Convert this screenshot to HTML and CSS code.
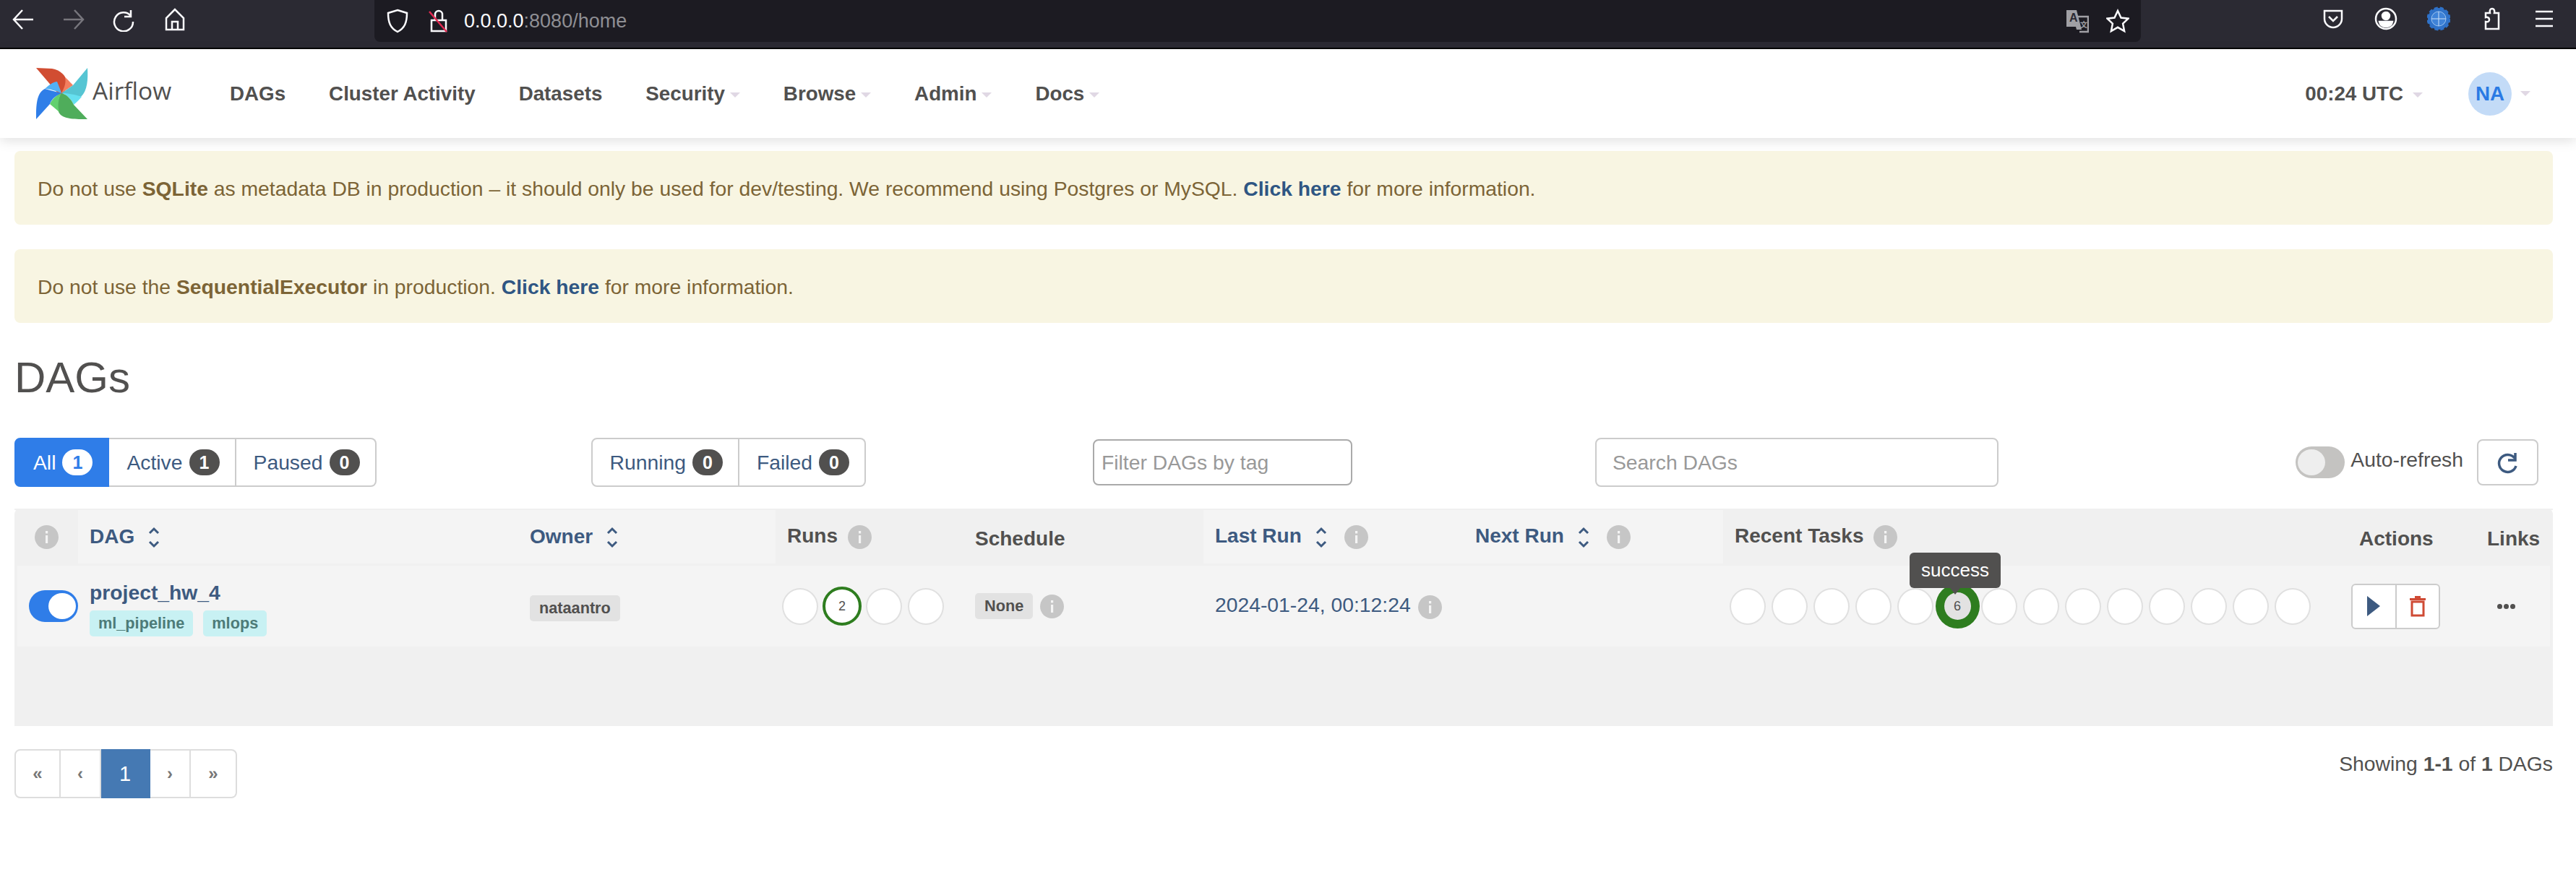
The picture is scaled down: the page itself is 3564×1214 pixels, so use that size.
FILE: index.html
```html
<!DOCTYPE html>
<html lang="en">

<head>
    <meta charset="UTF-8">
    <title>Airflow - DAGs</title>
    <link rel="stylesheet" href="styles.css">
</head>

<body>
    <svg class="defs" width="0" height="0">
        <symbol id="info" viewBox="0 0 33 33">
            <circle cx="16.5" cy="16.5" r="16.5" fill="#c6c6c6" />
            <rect x="15" y="14" width="3.2" height="11" fill="#f4f4f4" />
            <rect x="15" y="8" width="3.2" height="3.4" fill="#f4f4f4" />
        </symbol>
        <symbol id="sort" viewBox="0 0 18 30">
            <path d="M3 9l6-6 6 6M3 21l6 6 6-6" fill="none" stroke="#3d5a80" stroke-width="3" />
        </symbol>
    </svg>

    <!-- browser chrome -->
    <div class="browser">
        <div class="browser-nav">
            <svg class="ico" viewBox="0 0 32 32"><path d="M30 16H4M15 3L3 16l12 13" /></svg>
            <svg class="ico ico-off" viewBox="0 0 32 32"><path d="M2 16h26M17 3l12 13-12 13" /></svg>
            <svg class="ico" viewBox="0 0 32 32"><path d="M25 3v9h-9M25 11a13 13 0 1 0 3 8" /></svg>
            <svg class="ico" viewBox="0 0 32 32"><path d="M16 2L4 14v16h24V14zM12 30V19h8v11" /></svg>
        </div>
        <div class="urlbar">
            <svg class="ico" viewBox="0 0 32 32"><path d="M16 1l13 4c0 13-3 21-13 26C6 26 3 18 3 5z" /></svg>
            <svg class="ico" viewBox="0 0 32 32"><path d="M6 15h20v15H6zM11 15V7a5 5 0 0 1 10 0v8" /><path class="red" d="M3 3l24 28" /></svg>
            <span class="url"><b>0.0.0.0</b>:8080/home</span>
            <div class="url-end">
                <svg class="ico ico-translate" viewBox="0 0 32 32">
                    <path class="page-back" d="M16 10h15v21H19" />
                    <path class="page-front" d="M1 1h14l7 27h-7l-1-4H1z" />
                    <text class="glyph-a" x="5" y="17">A</text>
                    <text class="glyph-b" x="20" y="25">文</text>
                </svg>
                <svg class="ico" viewBox="0 0 32 32"><path d="M16 2l4.500 9.500 10 1.200-7.400 7 2 10.300-9.100-5.200L6.900 30l2-10.300-7.400-7 10-1.200z" /></svg>
            </div>
        </div>
        <div class="browser-tools">
            <svg class="ico" viewBox="0 0 32 32"><path d="M4 5h24v11a12 12 0 0 1-24 0zM10 13l6 6 6-6" /></svg>
            <svg class="ico" viewBox="0 0 32 32"><circle cx="16" cy="16" r="14" /><circle cx="16" cy="12" r="5" fill="#fff" /><path d="M7 20h18c-1 5-5 7-9 7s-8-2-9-7z" fill="#fff" /></svg>
            <svg class="ico ico-globe" viewBox="0 0 32 32"><circle cx="16" cy="16" r="15" fill="#2f72c9" stroke="#2f72c9" stroke-width="3" stroke-dasharray="5 3" /><circle cx="16" cy="16" r="10" fill="#3f83d8" stroke="#9cc3ee" stroke-width="1" /><path d="M6 16h20M16 6v20" stroke="#cfe2f8" stroke-width="1" /></svg>
            <svg class="ico" viewBox="0 0 32 32"><path d="M8 30V20c4 1 5-1 5-3s-2-4-5-3V8h6c-1-5 1-6 3-6s4 2 3 6h6v22z" /></svg>
            <svg class="ico" viewBox="0 0 32 32"><path d="M4 6h24M4 16h24M4 26h24" /></svg>
        </div>
    </div>

    <!-- airflow nav -->
    <nav class="navbar">
        <a class="brand">
            <svg class="logo" viewBox="0 0 72 72">
                <path fill="#d14d32" d="M0 0l22 1c12 2 19 10 20 17 1 8-4 18-7 23z" />
                <path fill="#f37f60" d="M40 13c4 3 9 9 11 11L35 35c3-6 7-13 5-22z" />
                <path fill="#56c5d3" d="M71 0c1 15 0 32-9 40L35 35l16-11z" />
                <path fill="#66e0f0" d="M35 35c8 0 20 2 28 5-4 5-10 10-11 11-3-7-9-14-17-16z" />
                <path fill="#4fad5b" d="M71 71c-16 0-32 0-38-7-5-6-5-19 2-29 8 2 14 9 17 16z" />
                <path fill="#62d06f" d="M35 35c-4 6-6 18-3 26l-13-11c2-6 10-13 16-15z" />
                <path fill="#2f7ee8" d="M0 71c0-18 0-36 12-42l23 6c-7 3-14 8-16 15z" />
                <path fill="#52b1f5" d="M12 29c4-4 12-10 17-10 2 5 5 12 6 16-7-3-16-6-23-6z" />
            </svg>
            <span class="brand-name">Airflow</span>
        </a>
        <ul class="menu">
            <li>DAGs</li>
            <li>Cluster Activity</li>
            <li>Datasets</li>
            <li>Security<i class="caret"></i></li>
            <li>Browse<i class="caret"></i></li>
            <li>Admin<i class="caret"></i></li>
            <li>Docs<i class="caret"></i></li>
        </ul>
        <div class="nav-right">
            <span class="clock">00:24 UTC<i class="caret"></i></span>
            <span class="avatar">NA</span><i class="caret"></i>
        </div>
    </nav>

    <main class="content">
        <div class="alert">
            <span>Do not use <b>SQLite</b> as metadata DB in production – it should only be used for dev/testing. We recommend using Postgres or MySQL. <a>Click here</a> for more information.</span>
        </div>
        <div class="alert">
            <span>Do not use the <b>SequentialExecutor</b> in production. <a>Click here</a> for more information.</span>
        </div>

        <h2>DAGs</h2>

        <div class="toolbar">
            <div class="btn-group">
                <a class="btn btn-on">All <span class="pill pill-on">1</span></a>
                <a class="btn">Active <span class="pill">1</span></a>
                <a class="btn">Paused <span class="pill">0</span></a>
            </div>
            <div class="btn-group group-status">
                <a class="btn">Running <span class="pill">0</span></a>
                <a class="btn">Failed <span class="pill">0</span></a>
            </div>
            <input class="tag-filter" type="text" placeholder="Filter DAGs by tag">
            <input class="search" type="text" placeholder="Search DAGs">
            <div class="auto">
                <span class="switch switch-off"></span>
                <span class="auto-label">Auto-refresh</span>
            </div>
            <a class="refresh">
                <svg width="34" height="34" viewBox="0 0 34 34"><path d="M27 4v10h-10M26 11a12 12 0 1 0 2 11" fill="none" stroke="#3d5a80" stroke-width="3.500" /></svg>
            </a>
        </div>

        <div class="table-wrap">
            <table class="dags">
                <colgroup>
                    <col class="c-info"><col class="c-dag"><col class="c-owner"><col class="c-runs"><col class="c-sched">
                    <col class="c-last"><col class="c-next"><col class="c-tasks"><col class="c-actions"><col class="c-links">
                </colgroup>
                <thead>
                    <tr>
                        <th class="center"><svg class="i-info"><use href="#info" /></svg></th>
                        <th class="lit"><a>DAG</a><svg class="i-sort"><use href="#sort" /></svg></th>
                        <th class="lit"><a>Owner</a><svg class="i-sort"><use href="#sort" /></svg></th>
                        <th>Runs<svg class="i-info"><use href="#info" /></svg></th>
                        <th class="low">Schedule</th>
                        <th class="lit"><a>Last Run</a><svg class="i-sort"><use href="#sort" /></svg><svg class="i-info"><use href="#info" /></svg></th>
                        <th class="lit"><a>Next Run</a><svg class="i-sort"><use href="#sort" /></svg><svg class="i-info"><use href="#info" /></svg></th>
                        <th>Recent Tasks<svg class="i-info"><use href="#info" /></svg></th>
                        <th class="low">Actions</th>
                        <th class="low">Links</th>
                    </tr>
                </thead>
                <tbody>
                    <tr>
                        <td class="cell-switch"><span class="switch"></span></td>
                        <td>
                            <a class="dag-name">project_hw_4</a>
                            <div class="tags"><span class="tag">ml_pipeline</span><span class="tag">mlops</span></div>
                        </td>
                        <td><span class="label owner">nataantro</span></td>
                        <td class="cell-circles">
                            <div class="circles">
                                <span class="slot"><i class="dot"></i></span>
                                <span class="slot"><i class="dot dot-run">2</i></span>
                                <span class="slot"><i class="dot"></i></span>
                                <span class="slot"><i class="dot"></i></span>
                            </div>
                        </td>
                        <td><span class="label">None</span><svg class="i-info i-near"><use href="#info" /></svg></td>
                        <td colspan="2"><a class="last-run">2024-01-24, 00:12:24</a><svg class="i-info i-near"><use href="#info" /></svg></td>
                        <td class="cell-circles">
                            <div class="circles">
                                <span class="slot"><i class="dot"></i></span>
                                <span class="slot"><i class="dot"></i></span>
                                <span class="slot"><i class="dot"></i></span>
                                <span class="slot"><i class="dot"></i></span>
                                <span class="slot"><i class="dot"></i></span>
                                <span class="slot slot-hover">
                                    <i class="dot dot-task">6</i>
                                    <span class="tooltip">success</span>
                                </span>
                                <span class="slot"><i class="dot"></i></span>
                                <span class="slot"><i class="dot"></i></span>
                                <span class="slot"><i class="dot"></i></span>
                                <span class="slot"><i class="dot"></i></span>
                                <span class="slot"><i class="dot"></i></span>
                                <span class="slot"><i class="dot"></i></span>
                                <span class="slot"><i class="dot"></i></span>
                                <span class="slot"><i class="dot"></i></span>
                            </div>
                        </td>
                        <td class="cell-actions">
                            <div class="actions">
                                <a class="act act-play"><svg width="20" height="30" viewBox="0 0 20 30"><path d="M1 1l18 14L1 29z" fill="#3d5a80" /></svg></a>
                                <a class="act"><svg width="24" height="30" viewBox="0 0 24 30"><path d="M1 4h22v3H1zM8 1h8v3H8z" fill="#cf4a34" /><path d="M4 9h16v19H4z" fill="none" stroke="#cf4a34" stroke-width="3" /></svg></a>
                            </div>
                        </td>
                        <td class="cell-links"><span class="dots"><i></i><i></i><i></i></span></td>
                    </tr>
                </tbody>
            </table>
        </div>

        <div class="footer-row">
            <ul class="pager">
                <li class="pg-side">«</li>
                <li class="pg-step">‹</li>
                <li class="pg-now">1</li>
                <li class="pg-step">›</li>
                <li class="pg-side">»</li>
            </ul>
            <p class="showing">Showing <b>1-1</b> of <b>1</b> DAGs</p>
        </div>
    </main>
</body>

</html>
```

FILE: styles.css
```css
* {
    box-sizing: border-box;
}

body {
    margin: 0;
    font-family: "Liberation Sans", Arial, sans-serif;
    font-size: 28.3px;
    color: #51504f;
    background-color: #fff;
    overflow: hidden;
}

.defs {
    position: absolute;
}

/* browser chrome */
.browser {
    display: flex;
    height: 68px;
    background-color: #2b2a33;
    border-bottom: 2px solid #000;
}

.browser-nav {
    display: flex;
    width: 518px;
    padding: 10px 0 0 16px;
    gap: 38px;
}

.ico {
    width: 32px;
    height: 34px;
    fill: none;
    stroke: #fbfbfe;
    stroke-width: 2.5;
}

.ico-off {
    stroke: #77767d;
}

.ico-globe {
    stroke: none;
}

.ico .red {
    stroke: #e22850;
}

.ico-translate .page-back {
    stroke: #a0a0a5;
}

.ico-translate .page-front {
    fill: #a0a0a5;
    stroke: none;
}

.ico-translate text {
    stroke: none;
    font-weight: bold;
}

.glyph-a {
    font-size: 16px;
    fill: #2b2a33;
}

.glyph-b {
    font-family: "Noto Sans CJK SC", sans-serif;
    font-size: 10px;
    fill: #a0a0a5;
}

.urlbar {
    display: flex;
    align-items: center;
    gap: 25px;
    width: 2444px;
    height: 58px;
    padding: 0 16px;
    background-color: #1c1b22;
    border-radius: 0 0 8px 8px;
}

.url {
    margin-left: -6px;
    font-size: 27px;
    color: #8f8f94;
}

.url b {
    font-weight: normal;
    color: #fbfbfe;
}

.url-end {
    display: flex;
    gap: 24px;
    margin-left: auto;
}

.browser-tools {
    display: flex;
    flex: 1;
    justify-content: flex-end;
    gap: 41px;
    padding: 9px 28px 0 0;
}

/* navbar */
.navbar {
    position: relative;
    display: flex;
    align-items: center;
    height: 123px;
    background-color: #fff;
    box-shadow: 0 4px 16px rgba(0, 0, 0, 0.12);
}

.brand {
    display: flex;
    align-items: center;
    margin-left: 50px;
    width: 268px;
}

.logo {
    width: 72px;
    height: 72px;
}

.brand-name {
    margin: -10px 0 0 6px;
    font-family: "Open Sans", sans-serif;
    font-size: 33.5px;
}

.menu {
    display: flex;
    gap: 60px;
    margin: 0;
    padding: 0;
    list-style: none;
    font-size: 27.75px;
    font-weight: bold;
}

.caret {
    display: inline-block;
    margin-left: 7px;
    border-top: 7px solid #e0d8e4;
    border-left: 7px solid transparent;
    border-right: 7px solid transparent;
    vertical-align: middle;
}

.nav-right {
    display: flex;
    align-items: center;
    margin-left: auto;
    padding-right: 63px;
    font-size: 27.75px;
    font-weight: bold;
}

.clock {
    margin-right: 63px;
}

.clock .caret {
    margin-left: 13px;
}

.avatar {
    display: flex;
    align-items: center;
    justify-content: center;
    width: 60px;
    height: 60px;
    color: #2a7ae4;
    background-color: #c3dbf7;
    border-radius: 50%;
}

.avatar + .caret {
    margin-left: 12px;
}

/* page */
.content {
    padding: 18px 32px 0 20px;
}

.alert {
    display: flex;
    align-items: center;
    height: 102px;
    margin-bottom: 34px;
    padding: 2px 32px 0;
    color: #7c6436;
    background-color: #f8f5e2;
    border-radius: 8px;
}

.alert a {
    font-weight: bold;
    color: #2f5683;
}

h2 {
    margin: 0 0 41px;
    height: 84px;
    line-height: 84px;
    font-size: 60px;
    font-weight: normal;
}

.toolbar {
    display: flex;
    align-items: center;
    height: 68px;
    margin-bottom: 30px;
}

.btn-group {
    display: flex;
    height: 68px;
    border-radius: 8px;
}

.group-status {
    margin-left: 297px;
}

.btn {
    display: flex;
    align-items: center;
    gap: 9px;
    padding: 0 21px 0 24px;
    color: #3d5a80;
    border: 2px solid #ccc;
    border-left-width: 0;
}

.btn:first-child {
    border-left-width: 2px;
    border-radius: 8px 0 0 8px;
}

.btn:last-child {
    border-radius: 0 8px 8px 0;
}

.btn-on {
    color: #fff;
    background-color: #2f7de8;
    border-color: #2f7de8;
}

.pill {
    display: flex;
    align-items: center;
    justify-content: center;
    width: 42px;
    height: 36px;
    font-weight: bold;
    font-size: 25px;
    color: #fff;
    background-color: #51504f;
    border-radius: 18px;
}

.pill-on {
    color: #2f7de8;
    background-color: #fff;
}

input {
    height: 68px;
    font-family: inherit;
    font-size: 28.3px;
    border-radius: 8px;
    outline: none;
}

input::placeholder {
    color: #999;
}

.tag-filter {
    width: 359px;
    height: 64px;
    margin-left: 314px;
    padding: 0 10px;
    border: 2px solid #aaa;
}

.search {
    width: 558px;
    margin-left: 336px;
    padding: 0 22px;
    border: 2px solid #ccc;
}

.auto {
    display: flex;
    align-items: center;
    margin-left: auto;
    gap: 8px;
}

.auto-label {
    margin-top: -8px;
}

.switch {
    position: relative;
    display: block;
    width: 68px;
    height: 44px;
    background-color: #2f7de8;
    border-radius: 22px;
}

.switch::after {
    content: "";
    position: absolute;
    top: 4px;
    right: 3px;
    width: 38px;
    height: 36px;
    background-color: #fff;
    border-radius: 50%;
}

.switch-off {
    background-color: #c4c3c1;
}

.switch-off::after {
    left: 3px;
    right: auto;
    background-color: #eee;
}

.refresh {
    display: flex;
    align-items: center;
    justify-content: center;
    width: 85px;
    height: 64px;
    margin: 0 20px 0 19px;
    border: 2px solid #ccc;
    border-radius: 8px;
}

/* table */
.table-wrap {
    height: 301px;
    background-color: #f0f0f0;
    border-radius: 8px 8px 0 0;
}

.dags {
    width: 100%;
    table-layout: fixed;
    border-collapse: separate;
    border-spacing: 0;
}

.c-info { width: 88px; }
.c-dag { width: 609px; }
.c-owner { width: 356px; }
.c-runs { width: 260px; }
.c-sched { width: 332px; }
.c-last { width: 360px; }
.c-next { width: 359px; }
.c-tasks { width: 864px; }
.c-actions { width: 177px; }
.c-links { width: 107px; }

th {
    height: 79px;
    padding: 0 0 0 16px;
    text-align: left;
    font-size: 28px;
    font-weight: bold;
    white-space: nowrap;
    border-top: 2px solid #f0f0f0;
    border-bottom: 3px solid #f0f0f0;
}

th.center {
    padding: 0;
    text-align: center;
}

th.low {
    padding-top: 6px;
}

th.lit {
    background-color: #f4f4f4;
}

th a {
    color: #3d5a80;
}

.i-info {
    width: 33px;
    height: 33px;
    margin-left: 14px;
    vertical-align: middle;
}

th.center .i-info {
    margin: 0;
}

.i-sort {
    width: 18px;
    height: 30px;
    margin-left: 18px;
    vertical-align: middle;
}

.i-sort + .i-info {
    margin-left: 23px;
}

.i-near {
    margin-left: 10px;
}

td {
    height: 112px;
    padding: 0 0 0 16px;
    background-color: #f4f4f4;
    white-space: nowrap;
}

td:first-child {
    border-left: 4px solid #f0f0f0;
}

td:last-child {
    border-right: 4px solid #f0f0f0;
}

.dag-name {
    display: block;
    padding-top: 6px;
    font-weight: bold;
    color: #3d5a80;
}

.tags {
    display: flex;
    gap: 14px;
    margin-top: 8px;
}

.tag {
    height: 36px;
    padding: 0 12px;
    line-height: 36px;
    font-size: 21.7px;
    font-weight: bold;
    color: #4d7b78;
    background-color: #c8f1f3;
    border-radius: 5px;
}

.label {
    display: inline-block;
    height: 36px;
    padding: 0 13px;
    line-height: 36px;
    font-size: 21.7px;
    font-weight: bold;
    vertical-align: middle;
    background-color: #e2e2e2;
    border-radius: 5px;
}

.owner {
    margin-top: 6px;
}

.last-run {
    color: #3d5a80;
}

.cell-circles {
    padding-left: 5px;
    padding-right: 0;
}

.circles {
    display: flex;
}

.slot {
    position: relative;
    display: flex;
    flex: none;
    align-items: center;
    justify-content: center;
    width: 58px;
    height: 62px;
}

.dot {
    display: flex;
    flex: none;
    align-items: center;
    justify-content: center;
    width: 50px;
    height: 51px;
    font-size: 18px;
    font-style: normal;
    background-color: #fff;
    border: 2px solid #e0e0e0;
    border-radius: 50%;
}

.dot-run {
    width: 54px;
    height: 54px;
    border: 4px solid #2e7d1f;
}

.dot-task {
    width: 61px;
    height: 62px;
    background-color: #e2e2e2;
    border: 12px solid #2e7d1f;
}

.tooltip {
    position: absolute;
    top: -43px;
    left: -37px;
    width: 126px;
    height: 49px;
    line-height: 49px;
    text-align: center;
    font-size: 26px;
    color: #fff;
    background-color: #51504f;
    border-radius: 6px;
}

.tooltip::after {
    content: "";
    position: absolute;
    top: 49px;
    left: 56px;
    border-top: 9px solid #51504f;
    border-left: 7px solid transparent;
    border-right: 7px solid transparent;
}

.cell-actions {
    padding-left: 5px;
}

.actions {
    display: flex;
    width: 123px;
    height: 63px;
    background-color: #fff;
    border: 2px solid #ccc;
    border-radius: 6px;
}

.act {
    display: flex;
    flex: 1;
    align-items: center;
    justify-content: center;
}

.act-play {
    border-right: 2px solid #ccc;
}

.dots {
    display: flex;
    gap: 2px;
    margin-left: 14px;
}

.dots i {
    width: 7px;
    height: 7px;
    background-color: #51504f;
    border-radius: 50%;
}

/* footer */
.footer-row {
    display: flex;
    align-items: flex-start;
    justify-content: space-between;
    margin-top: 32px;
}

.pager {
    display: flex;
    height: 68px;
    margin: 0;
    padding: 0;
    list-style: none;
    font-size: 24px;
    font-weight: bold;
    color: #777;
}

.pager li {
    display: flex;
    align-items: center;
    justify-content: center;
    border: 2px solid #ddd;
    border-left-width: 0;
}

.pg-side {
    width: 64px;
}

.pg-step {
    width: 56px;
}

.pager .pg-side:first-child {
    border-left-width: 2px;
    border-radius: 8px 0 0 8px;
}

.pager .pg-side:last-child {
    border-radius: 0 8px 8px 0;
}

.pager .pg-now {
    width: 68px;
    font-size: 29px;
    font-weight: normal;
    color: #fff;
    background-color: #4579b3;
    border-color: #4579b3;
}

.showing {
    margin: 4px 0 0;
}
```
